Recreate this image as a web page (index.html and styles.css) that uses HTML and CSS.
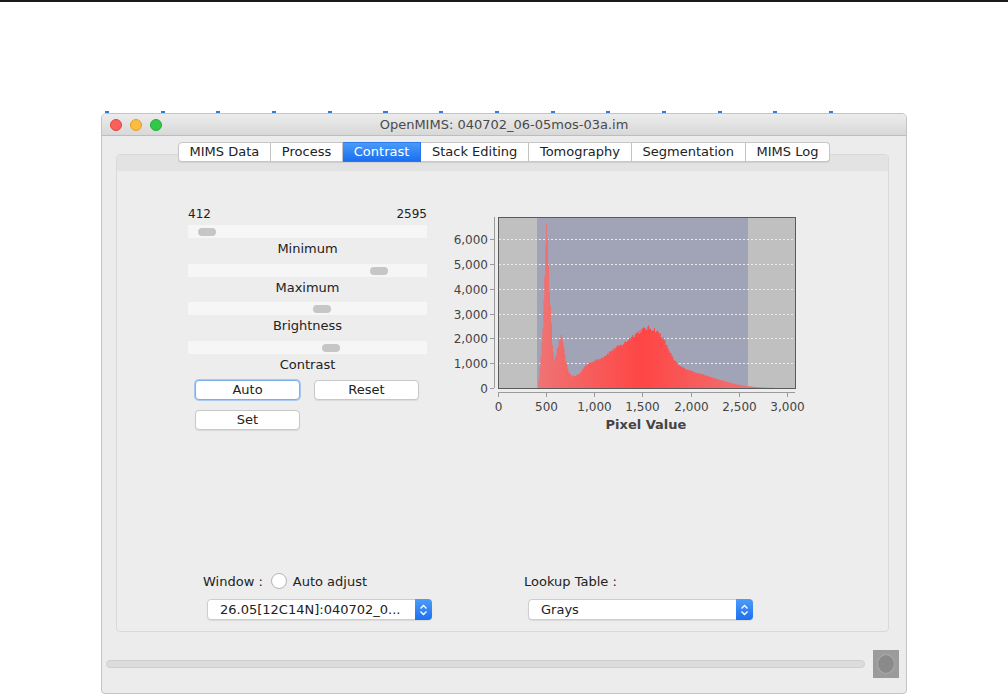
FILE: index.html
```html
<!DOCTYPE html>
<html>
<head>
    <title>OpenMIMS</title>
    <link rel="stylesheet" href="styles.css">
</head>
<body>
    <div class="topline"></div>
    <div class="desktop">
        <div class="dock-marks"></div>
        <div class="window">
            <div class="titlebar">
                <div class="lights">
                    <span class="light red"></span>
                    <span class="light yellow"></span>
                    <span class="light green"></span>
                </div>
                <div class="title">OpenMIMS: 040702_06-05mos-03a.im</div>
                <div></div>
            </div>
            <div class="window-body">
                <div class="tabs">
                    <div class="tab">MIMS Data</div>
                    <div class="tab">Process</div>
                    <div class="tab active">Contrast</div>
                    <div class="tab">Stack Editing</div>
                    <div class="tab">Tomography</div>
                    <div class="tab">Segmentation</div>
                    <div class="tab">MIMS Log</div>
                </div>
                <div class="pane">
                    <div class="pane-top"></div>
                    <div class="contrast">
                        <div class="sliders">
                            <div class="range-row">
                                <span>412</span>
                                <span>2595</span>
                            </div>
                            <div class="slider"><span class="thumb" style="left: 10px"></span></div>
                            <div class="slider-label">Minimum</div>
                            <div class="slider"><span class="thumb" style="left: 182px"></span></div>
                            <div class="slider-label">Maximum</div>
                            <div class="slider"><span class="thumb" style="left: 125px"></span></div>
                            <div class="slider-label">Brightness</div>
                            <div class="slider"><span class="thumb" style="left: 134px"></span></div>
                            <div class="slider-label">Contrast</div>
                            <div class="button-grid">
                                <button class="btn btn-focus">Auto</button>
                                <button class="btn">Reset</button>
                                <button class="btn">Set</button>
                            </div>
                        </div>
                        <svg class="histogram" width="360" height="232" viewBox="0 0 360 232">
                            <defs>
                                <linearGradient id="redFill" gradientUnits="userSpaceOnUse" x1="87" y1="0" x2="298" y2="0">
                                    <stop offset="0" stop-color="#ef7474"/>
                                    <stop offset="0.5" stop-color="#ff4545"/>
                                    <stop offset="1" stop-color="#ef7272"/>
                                </linearGradient>
                            </defs>
                            <rect x="48" y="12" width="297" height="171" fill="#c0c0c0"/>
                            <rect x="87" y="12" width="211" height="171" fill="#a1a3b7"/>
                            <g id="grid" stroke="#ececec" stroke-dasharray="2,2" stroke-width="1"></g>
                            <path id="histPath" fill="url(#redFill)"/>
                            <rect x="48.5" y="12.5" width="297" height="171" fill="none" stroke="#5a5a5a"/>
                            <g id="axes" stroke="#9a9a9a" stroke-width="1"></g>
                            <g id="labels" class="axis-text"></g>
                            <text class="axis-title" x="196" y="224" text-anchor="middle">Pixel Value</text>
                        </svg>
                    </div>
                    <div class="bottom-controls">
                        <div class="control-group">
                            <div class="control-label">
                                Window :
                                <span class="radio"></span>
                                Auto adjust
                            </div>
                            <div class="select">
                                <span class="select-text">26.05[12C14N]:040702_0...</span>
                                <span class="stepper">
                                    <svg width="9" height="14" viewBox="0 0 9 14"><path d="M1.5 5.5 L4.5 2.5 L7.5 5.5 M1.5 8.5 L4.5 11.5 L7.5 8.5" fill="none" stroke="#fff" stroke-width="1.4"/></svg>
                                </span>
                            </div>
                        </div>
                        <div class="control-group">
                            <div class="control-label">Lookup Table :</div>
                            <div class="select">
                                <span class="select-text">Grays</span>
                                <span class="stepper">
                                    <svg width="9" height="14" viewBox="0 0 9 14"><path d="M1.5 5.5 L4.5 2.5 L7.5 5.5 M1.5 8.5 L4.5 11.5 L7.5 8.5" fill="none" stroke="#fff" stroke-width="1.4"/></svg>
                                </span>
                            </div>
                        </div>
                    </div>
                </div>
                <div class="statusbar">
                    <div class="progress"></div>
                    <div class="stop"><span></span></div>
                </div>
            </div>
        </div>
    </div>

    <script>
        // histogram: pixel value -> svg x, count -> svg y
        const svgNS = 'http://www.w3.org/2000/svg';
        const px = v => 48 + v * 0.09633;
        const py = c => 183 - c * 0.02483;

        const shapePoints = [
            [410, 0], [430, 800], [460, 2500], [480, 4500], [495, 6300], [502, 6650],
            [512, 6000], [530, 4000], [560, 1800], [580, 1150], [600, 1400], [630, 1900],
            [650, 2080], [670, 1900], [700, 1100], [730, 620], [760, 480], [800, 500],
            [850, 620], [900, 900], [950, 1050], [1000, 1100], [1100, 1300], [1200, 1600],
            [1300, 1800], [1400, 2150], [1500, 2380], [1560, 2450], [1620, 2380],
            [1680, 2200], [1720, 1950], [1770, 1550], [1820, 1150], [1870, 920],
            [1920, 820], [2000, 700], [2100, 580], [2200, 450], [2300, 330],
            [2400, 220], [2500, 130], [2600, 70], [2700, 30], [2800, 10], [2900, 0]
        ];

        function shape(v) {
            for (let i = 1; i < shapePoints.length; i++) {
                const [x0, y0] = shapePoints[i - 1];
                const [x1, y1] = shapePoints[i];
                if (v <= x1) {
                    return y0 + (y1 - y0) * (v - x0) / (x1 - x0);
                }
            }
            return 0;
        }

        let seed = 12345;
        function rnd() {
            seed = (seed * 16807) % 2147483647;
            return seed / 2147483647;
        }

        let d = 'M' + px(410) + ',183';
        for (let v = 410; v < 2900; v += 10) {
            const c = shape(v) * (0.95 + rnd() * 0.08);
            d += ' L' + px(v).toFixed(2) + ',' + py(c).toFixed(2);
            d += ' L' + px(v + 10).toFixed(2) + ',' + py(c).toFixed(2);
        }
        d += ' L' + px(2900) + ',183 Z';
        document.getElementById('histPath').setAttribute('d', d);

        function line(parent, x1, y1, x2, y2) {
            const l = document.createElementNS(svgNS, 'line');
            l.setAttribute('x1', x1);
            l.setAttribute('y1', y1);
            l.setAttribute('x2', x2);
            l.setAttribute('y2', y2);
            parent.appendChild(l);
        }

        function label(parent, x, y, txt, anchor) {
            const t = document.createElementNS(svgNS, 'text');
            t.setAttribute('x', x);
            t.setAttribute('y', y);
            t.setAttribute('text-anchor', anchor);
            t.textContent = txt;
            parent.appendChild(t);
        }

        const grid = document.getElementById('grid');
        const axes = document.getElementById('axes');
        const labels = document.getElementById('labels');

        line(axes, 44.5, 12, 44.5, 183);
        line(axes, 48, 187.5, 345, 187.5);

        for (let c = 0; c <= 6000; c += 1000) {
            const y = Math.round(py(c)) + 0.5;
            if (c > 0) line(grid, 49, y, 345, y);
            line(axes, 40, y, 44, y);
            label(labels, 38, y + 4.5, c.toLocaleString('en-US'), 'end');
        }
        for (let v = 0; v <= 3000; v += 500) {
            const x = Math.round(px(v)) + 0.5;
            line(axes, x, 188, x, 192);
            label(labels, x, 206, v.toLocaleString('en-US'), 'middle');
        }
    </script>
</body>
</html>
```

FILE: styles.css
```css
body {
    margin: 0;
    background: #fff;
    font-family: "DejaVu Sans", "Liberation Sans", sans-serif;
    font-size: 13px;
    color: #222;
}

.topline {
    height: 2px;
    background: #1a1a1a;
}

.desktop {
    padding-top: 109px;
    padding-left: 101px;
}

.dock-marks {
    margin-left: 4px;
    width: 760px;
    height: 2px;
    background: repeating-linear-gradient(to right, #2f7bd6 0 4px, transparent 4px 55.7px);
}

.window {
    width: 804px;
    border: 1px solid #c4c4c4;
    border-radius: 5px 5px 4px 4px;
    background: #ececec;
    overflow: hidden;
}

.titlebar {
    height: 21px;
    display: grid;
    grid-template-columns: 1fr auto 1fr;
    align-items: center;
    background: linear-gradient(#ececec, #d8d8d8);
    border-bottom: 1px solid #bdbdbd;
}

.lights {
    display: flex;
    gap: 8px;
    padding-left: 8px;
}

.light {
    width: 12px;
    height: 12px;
    border-radius: 50%;
    box-sizing: border-box;
}

.light.red {
    background: #fc605c;
    border: 1px solid #e0443e;
}

.light.yellow {
    background: #fdbc40;
    border: 1px solid #dea123;
}

.light.green {
    background: #34c84a;
    border: 1px solid #27aa35;
}

.title {
    color: #4a4a4a;
    font-size: 13px;
}

.window-body {
    padding-top: 6px;
}

.tabs {
    display: flex;
    justify-content: center;
    position: relative;
    z-index: 1;
}

.tab {
    height: 18px;
    line-height: 18px;
    padding: 0 10.8px;
    background: #fff;
    border: 1px solid #c6c6c6;
    border-left: none;
    color: #222;
    box-shadow: 0 1px 1px rgba(0,0,0,0.08);
}

.tab:first-child {
    border-left: 1px solid #c6c6c6;
    border-radius: 4px 0 0 4px;
}

.tab:last-child {
    border-radius: 0 4px 4px 0;
}

.tab.active {
    background: linear-gradient(#4a9af8, #1b6ff0);
    border-color: #2a78ee;
    color: #fff;
}

.pane {
    margin: -8px 17px 0 14px;
    height: 476px;
    border: 1px solid #d9d9d9;
    border-radius: 4px;
    background: #ededed;
    display: flex;
    flex-direction: column;
}

.pane-top {
    height: 16px;
    background: #e3e3e3;
    border-radius: 4px 4px 0 0;
}

.contrast {
    display: flex;
    align-items: flex-start;
    padding: 34px 0 0 71px;
}

.sliders {
    width: 239px;
}

.range-row {
    display: flex;
    justify-content: space-between;
    font-size: 12px;
    line-height: 18px;
    margin-bottom: 2px;
}

.slider {
    position: relative;
    height: 13px;
    background: #f6f6f6;
}

.thumb {
    position: absolute;
    top: 3px;
    width: 18px;
    height: 8px;
    border-radius: 4px;
    background: #c6c6c6;
}

.slider-label {
    text-align: center;
    line-height: 21px;
    margin-bottom: 4.5px;
}

.button-grid {
    display: grid;
    grid-template-columns: 105px 105px;
    column-gap: 14px;
    row-gap: 10px;
    margin: 5px 0 0 7px;
}

.btn {
    height: 20px;
    padding: 0;
    font-family: "DejaVu Sans", "Liberation Sans", sans-serif;
    font-size: 13px;
    color: #222;
    background: #fff;
    border: 1px solid #c8c8c8;
    border-radius: 4px;
    box-shadow: 0 1px 1px rgba(0,0,0,0.08);
}

.btn-focus {
    border-color: #7eaee8;
    box-shadow: 0 0 0 1px #a9c9f2;
}

.histogram {
    margin-left: 23px;
    overflow: visible;
}

.axis-text {
    font-family: "DejaVu Sans", sans-serif;
    font-size: 12px;
    fill: #444;
}

.axis-title {
    font-family: "DejaVu Sans", sans-serif;
    font-size: 13px;
    font-weight: bold;
    fill: #444;
}

.bottom-controls {
    margin-top: auto;
    display: flex;
    padding: 0 0 11px 86px;
}

.control-group {
    width: 321px;
}

.control-label {
    display: flex;
    align-items: center;
    gap: 6px;
    height: 18px;
    color: #222;
}

.radio {
    width: 16px;
    height: 16px;
    margin-left: 2px;
    border-radius: 50%;
    background: #fff;
    border: 1px solid #b4b4b4;
    box-sizing: border-box;
}

.select {
    display: flex;
    width: 225px;
    height: 21px;
    margin: 9px 0 0 4px;
    background: #fff;
    border: 1px solid #cdcdcd;
    border-radius: 4px;
    box-sizing: border-box;
    box-shadow: 0 1px 1px rgba(0,0,0,0.08);
}

.select-text {
    flex: 1;
    line-height: 19px;
    padding-left: 12px;
}

.stepper {
    width: 17px;
    margin: -1px -1px -1px 0;
    display: flex;
    align-items: center;
    justify-content: center;
    background: linear-gradient(#4d9cf9, #1d70ef);
    border-radius: 0 4px 4px 0;
}

.statusbar {
    display: flex;
    align-items: center;
    gap: 8px;
    margin: 18px 0 0 0;
    padding: 0 7px 15px 4px;
}

.progress {
    flex: 1;
    height: 6px;
    background: #dcdcdc;
    border: 1px solid #cfcfcf;
    border-radius: 4px;
}

.stop {
    width: 26px;
    height: 28px;
    display: flex;
    align-items: center;
    justify-content: center;
    background: #9b9b9b;
}

.stop span {
    width: 16px;
    height: 18px;
    border-radius: 50%;
    background: #8a8a8a;
    border: 1px solid #acacac;
}
```
